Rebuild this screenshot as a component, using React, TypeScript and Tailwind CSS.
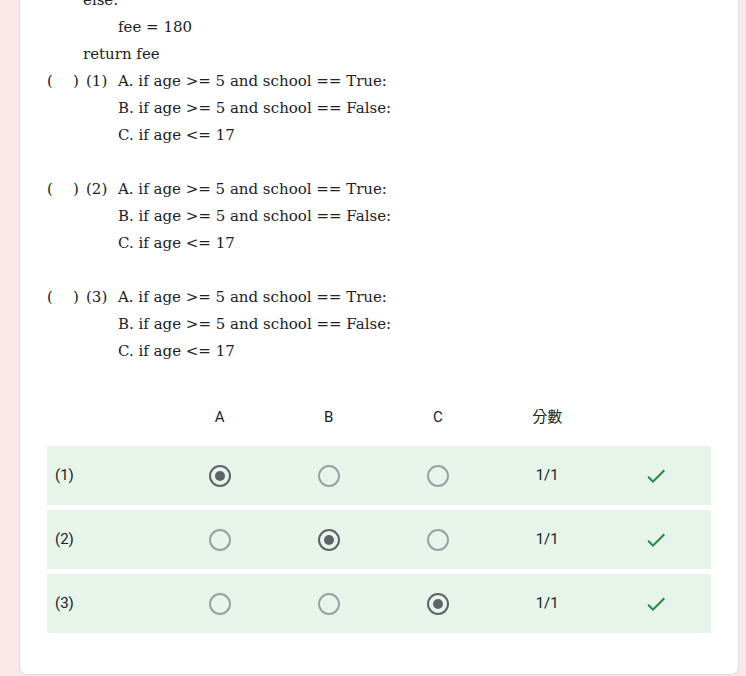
import React from "react";

type ROW = {
  label: string;
  picked: number;
  score: string;
};

const rows: ROW[] = [
  { label: "(1)", picked: 0, score: "1/1" },
  { label: "(2)", picked: 1, score: "1/1" },
  { label: "(3)", picked: 2, score: "1/1" },
];

const options = [
  "A. if age >= 5 and school == True:",
  "B. if age >= 5 and school == False:",
  "C. if age <= 17",
];

function Radio({ checked }: { checked: boolean }) {
  return (
    <div
      className={`flex h-[22px] w-[22px] items-center justify-center rounded-full border-2 ${
        checked ? "border-[#5f6368]" : "border-[#9aa0a6]"
      }`}
    >
      {checked && <div className="h-[10px] w-[10px] rounded-full bg-[#5f6368]" />}
    </div>
  );
}

function CheckIcon() {
  return (
    <svg width="24" height="24" viewBox="0 0 24 24" fill="#1e8e3e">
      <path d="M9 16.17L4.83 12l-1.42 1.41L9 19 21 7l-1.41-1.41z" />
    </svg>
  );
}

function Question({ num }: { num: string }) {
  return (
    <div className="flex">
      <div className="flex w-[71px] shrink-0">
        <span className="w-[26px]">(</span>
        <span className="w-[13px]">)</span>
        <span>{num}</span>
      </div>
      <div className="flex flex-col">
        {options.map((o) => (
          <span key={o}>{o}</span>
        ))}
      </div>
    </div>
  );
}

export default function App() {
  return (
    <div className="min-h-[676px] overflow-hidden bg-[#fbe8e8]">
      <div className="-mt-[13px] ml-[19px] w-[720px] rounded-b-lg border border-t-0 border-[#dadce0] bg-white pl-[27px] pr-[27px] pb-[41px]">
        <div
          className="text-[15px] leading-[27px] text-[#202124]"
          style={{ fontFamily: '"DejaVu Serif", "Liberation Serif", serif' }}
        >
          <div className="pl-[36px]">else:</div>
          <div className="pl-[71px]">fee = 180</div>
          <div className="pl-[36px]">return fee</div>
          <Question num="(1)" />
          <div className="h-[27px]" />
          <Question num="(2)" />
          <div className="h-[27px]" />
          <Question num="(3)" />
        </div>

        <div
          className="mt-[38px] text-[15px] text-[#202124]"
          style={{ fontFamily: 'Roboto, "Noto Sans CJK TC", sans-serif' }}
        >
          <div className="grid h-[28px] grid-cols-[118px_repeat(5,1fr)] items-center">
            <div />
            <div className="text-center">A</div>
            <div className="text-center">B</div>
            <div className="text-center">C</div>
            <div className="text-center">分數</div>
            <div />
          </div>
          <div className="mt-[15px] flex flex-col gap-[5px]">
            {rows.map((r) => (
              <div
                key={r.label}
                className="grid h-[59px] grid-cols-[118px_repeat(5,1fr)] items-center bg-[#e6f4ea]"
              >
                <div className="pl-[8px]">{r.label}</div>
                {[0, 1, 2].map((i) => (
                  <div key={i} className="flex justify-center">
                    <Radio checked={r.picked === i} />
                  </div>
                ))}
                <div className="text-center">{r.score}</div>
                <div className="flex justify-center">
                  <CheckIcon />
                </div>
              </div>
            ))}
          </div>
        </div>
      </div>
    </div>
  );
}
